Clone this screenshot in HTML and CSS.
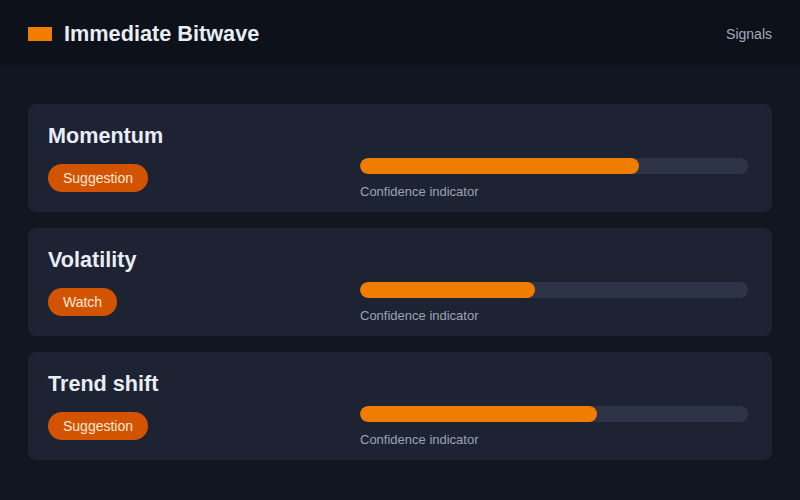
FILE: index.html
```html
<!DOCTYPE html>
<html lang="en">

<head>
    <meta charset="UTF-8">
    <title>Immediate Bitwave</title>
    <link rel="stylesheet" href="styles.css">
</head>

<body>
    <header class="topbar">
        <div class="brand">
            <span class="brand-mark"></span>
            <span class="brand-name">Immediate Bitwave</span>
        </div>
        <nav class="nav-link">Signals</nav>
    </header>

    <main class="signals">
        <!-- one card per signal -->
        <div class="signal-card">
            <div class="signal-info">
                <h2>Momentum</h2>
                <span class="badge">Suggestion</span>
            </div>
            <div class="signal-meter">
                <div class="track"><div class="fill" style="width: 72%;"></div></div>
                <p class="meter-label">Confidence indicator</p>
            </div>
        </div>

        <div class="signal-card">
            <div class="signal-info">
                <h2>Volatility</h2>
                <span class="badge">Watch</span>
            </div>
            <div class="signal-meter">
                <div class="track"><div class="fill" style="width: 45%;"></div></div>
                <p class="meter-label">Confidence indicator</p>
            </div>
        </div>

        <div class="signal-card">
            <div class="signal-info">
                <h2>Trend shift</h2>
                <span class="badge">Suggestion</span>
            </div>
            <div class="signal-meter">
                <div class="track"><div class="fill" style="width: 61%;"></div></div>
                <p class="meter-label">Confidence indicator</p>
            </div>
        </div>
    </main>
</body>

</html>
```

FILE: styles.css
```css
body {
    margin: 0;
    font-family: 'Liberation Sans', Arial, sans-serif;
    background-color: #121620;
    color: #e8edf7;
}

.topbar {
    box-sizing: border-box;
    height: 65px;
    padding: 3px 28px 0;
    background-color: #0d1119;
    display: flex;
    align-items: center;
    justify-content: space-between;
}

.brand {
    display: flex;
    align-items: center;
    gap: 12px;
}

.brand-mark {
    width: 24px;
    height: 14px;
    background-color: #f07d00;
}

.brand-name {
    font-size: 21.7px;
    font-weight: bold;
}

.nav-link {
    font-size: 14px;
    color: #a3abbb;
}

.signals {
    padding: 39px 28px;
    display: flex;
    flex-direction: column;
    gap: 16px;
}

.signal-card {
    background-color: #1e2333;
    border-radius: 8px;
    padding: 20px 24px 13px 20px;
    display: flex;
}

.signal-info {
    width: 312px;
}

.signal-info h2 {
    margin: 0 0 16px;
    font-size: 21.6px;
    line-height: 24px;
}

.badge {
    display: inline-block;
    height: 28px;
    line-height: 28px;
    padding: 0 15px;
    border-radius: 14px;
    background-color: #d35400;
    color: #fde8d8;
    font-size: 14px;
}

.signal-meter {
    flex: 1;
    padding-top: 34px;
}

.track {
    height: 16px;
    border-radius: 8px;
    background-color: #2d3447;
    overflow: hidden;
}

.fill {
    height: 100%;
    border-radius: 8px;
    background-color: #f07d00;
}

.meter-label {
    margin: 11px 0 0;
    font-size: 13px;
    line-height: 14px;
    color: #9aa3b4;
}
```
